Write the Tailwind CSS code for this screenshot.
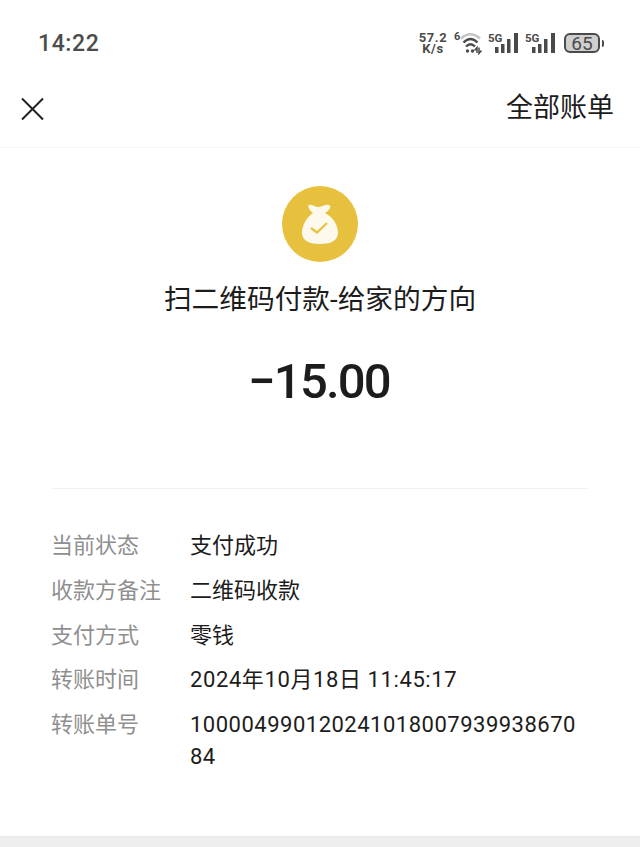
<!DOCTYPE html>
<html>
<head>
<meta charset="utf-8">
<script src="https://cdn.jsdelivr.net/npm/@tailwindcss/browser@4"></script>
</head>
<body class="bg-white">
<div class="w-[640px] h-[847px] overflow-hidden flex flex-col bg-white font-['Roboto','Noto_Sans_CJK_SC',sans-serif]">
  <div class="h-[88px] shrink-0 flex items-center justify-between pl-[38px] pr-[36px] pb-[2px]">
    <span class="text-[23px] font-medium tracking-[0.6px] text-[#4c4c4c] leading-none">14:22</span>
    <div class="flex items-center text-[#4a4a4a]">
      <div class="flex flex-col items-center text-[13px] tracking-[0.6px] font-bold w-[30px]"><span class="leading-[11px]">57.2</span><span class="leading-[11px]">K/s</span></div>
      <svg class="ml-[6px]" width="28" height="24" viewBox="0 0 28 24">
        <text x="0" y="9" font-size="11" font-weight="700" font-family="Roboto" fill="#4a4a4a">6</text>
        <path d="M7 7.500 Q16.500 -1 26 7.500" fill="none" stroke="#c4c4c4" stroke-width="2.400"/>
        <path d="M9.500 11.500 Q16.500 4.500 23.500 11.500" fill="none" stroke="#4a4a4a" stroke-width="2.400"/>
        <path d="M12 15.500 Q16.500 11 21 15.500" fill="none" stroke="#4a4a4a" stroke-width="2.400"/>
        <circle cx="13.500" cy="20" r="1.700" fill="#4a4a4a"/><circle cx="18.500" cy="20" r="1.700" fill="#4a4a4a"/>
        <path d="M23 22V16.500l-2.500 3M25 16.500v6l2.500-3" fill="none" stroke="#4a4a4a" stroke-width="1.500"/>
      </svg>
      <svg class="ml-[6px]" width="31" height="24" viewBox="0 0 31 24">
        <text x="0" y="10.500" font-size="11.500" font-weight="700" font-family="Roboto" fill="#4a4a4a">5G</text>
        <path d="M7 16h3.500v6H7zM13 13h3.500v9H13zM19 8h3.500v14H19zM26 2h4v20h-4z" fill="#4a4a4a"/>
      </svg>
      <svg class="ml-[6px]" width="31" height="24" viewBox="0 0 31 24">
        <text x="0" y="10.500" font-size="11.500" font-weight="700" font-family="Roboto" fill="#4a4a4a">5G</text>
        <path d="M7 16h3.500v6H7zM13 13h3.500v9H13zM19 8h3.500v14H19zM26 2h4v20h-4z" fill="#4a4a4a"/>
      </svg>
      <div class="ml-[8px] flex items-center">
        <div class="w-[36px] h-[20px] rounded-[6px] border-2 border-[#4a4a4a] bg-[#cfcfcf] flex items-center justify-center text-[19px] leading-none text-[#4a4a4a]">65</div>
        <div class="ml-[2px] w-[2px] h-[7px] bg-[#4a4a4a] rounded-r-sm"></div>
      </div>
    </div>
  </div>
  <div class="h-[60px] shrink-0 flex items-center justify-between pl-[20px] pr-[26px] pb-[18px] border-b border-[#f5f5f5]">
    <svg width="24" height="24" viewBox="0 0 24 24"><path d="M2 1.500L23 22.500M23 1.500L2 22.500" stroke="#222" stroke-width="2" fill="none"/></svg>
    <span class="text-[27px] text-[#1c1c1c] leading-none">全部账单</span>
  </div>
  <div class="flex flex-col items-center pt-[38px]">
    <div class="w-[76px] h-[76px] rounded-full bg-[#e7c13d] flex items-center justify-center">
      <svg width="36" height="40" viewBox="0 0 36 40">
        <path d="M6 1.500 Q9 0 12 2 Q17 4 22 1.500 Q26 0 28.500 2 Q28 6 23 9 C31 13 36 21 36 29 C36 37 28 40 18 40 C8 40 0 37 0 29 C0 21 5 13 11 9 Q7 6 6 1.500Z" fill="#fdf9ec"/>
        <path d="M9 24l6 4.500 10-9.500" fill="none" stroke="#e7c13d" stroke-width="2.200"/>
      </svg>
    </div>
    <div class="mt-[18px] text-[27.700px] leading-[40px] text-[#1c1c1c]">扫二维码付款-给家的方向</div>
    <div class="mt-[32px] -ml-[2px] text-[49px] leading-[60px] font-medium tracking-[-1.800px] text-[#1c1c1c]">−15.00</div>
  </div>
  <div class="mx-[52px] mt-[76px] border-t border-[#f0f0f0] pt-[41px] flex flex-col gap-[12.750px] text-[22px] leading-[32px]">
    <div class="flex -ml-[1px]"><span class="w-[139px] shrink-0 text-[#8f8f8f]">当前状态</span><span class="text-[#1c1c1c]">支付成功</span></div>
    <div class="flex -ml-[1px]"><span class="w-[139px] shrink-0 text-[#8f8f8f]">收款方备注</span><span class="text-[#1c1c1c]">二维码收款</span></div>
    <div class="flex -ml-[1px]"><span class="w-[139px] shrink-0 text-[#8f8f8f]">支付方式</span><span class="text-[#1c1c1c]">零钱</span></div>
    <div class="flex -ml-[1px]"><span class="w-[139px] shrink-0 text-[#8f8f8f]">转账时间</span><span class="text-[#1c1c1c] tracking-[0.600px]">2024年10月18日 11:45:17</span></div>
    <div class="flex -ml-[1px]"><span class="w-[139px] shrink-0 text-[#8f8f8f]">转账单号</span><span class="text-[#1c1c1c] tracking-[0.500px] break-all w-[398px]">100004990120241018007939938670<br>84</span></div>
  </div>
  <div class="mt-auto h-[11px] shrink-0 bg-[#eeeeee] border-t border-[#e9e9e9]"></div>
</div>
</body>
</html>
